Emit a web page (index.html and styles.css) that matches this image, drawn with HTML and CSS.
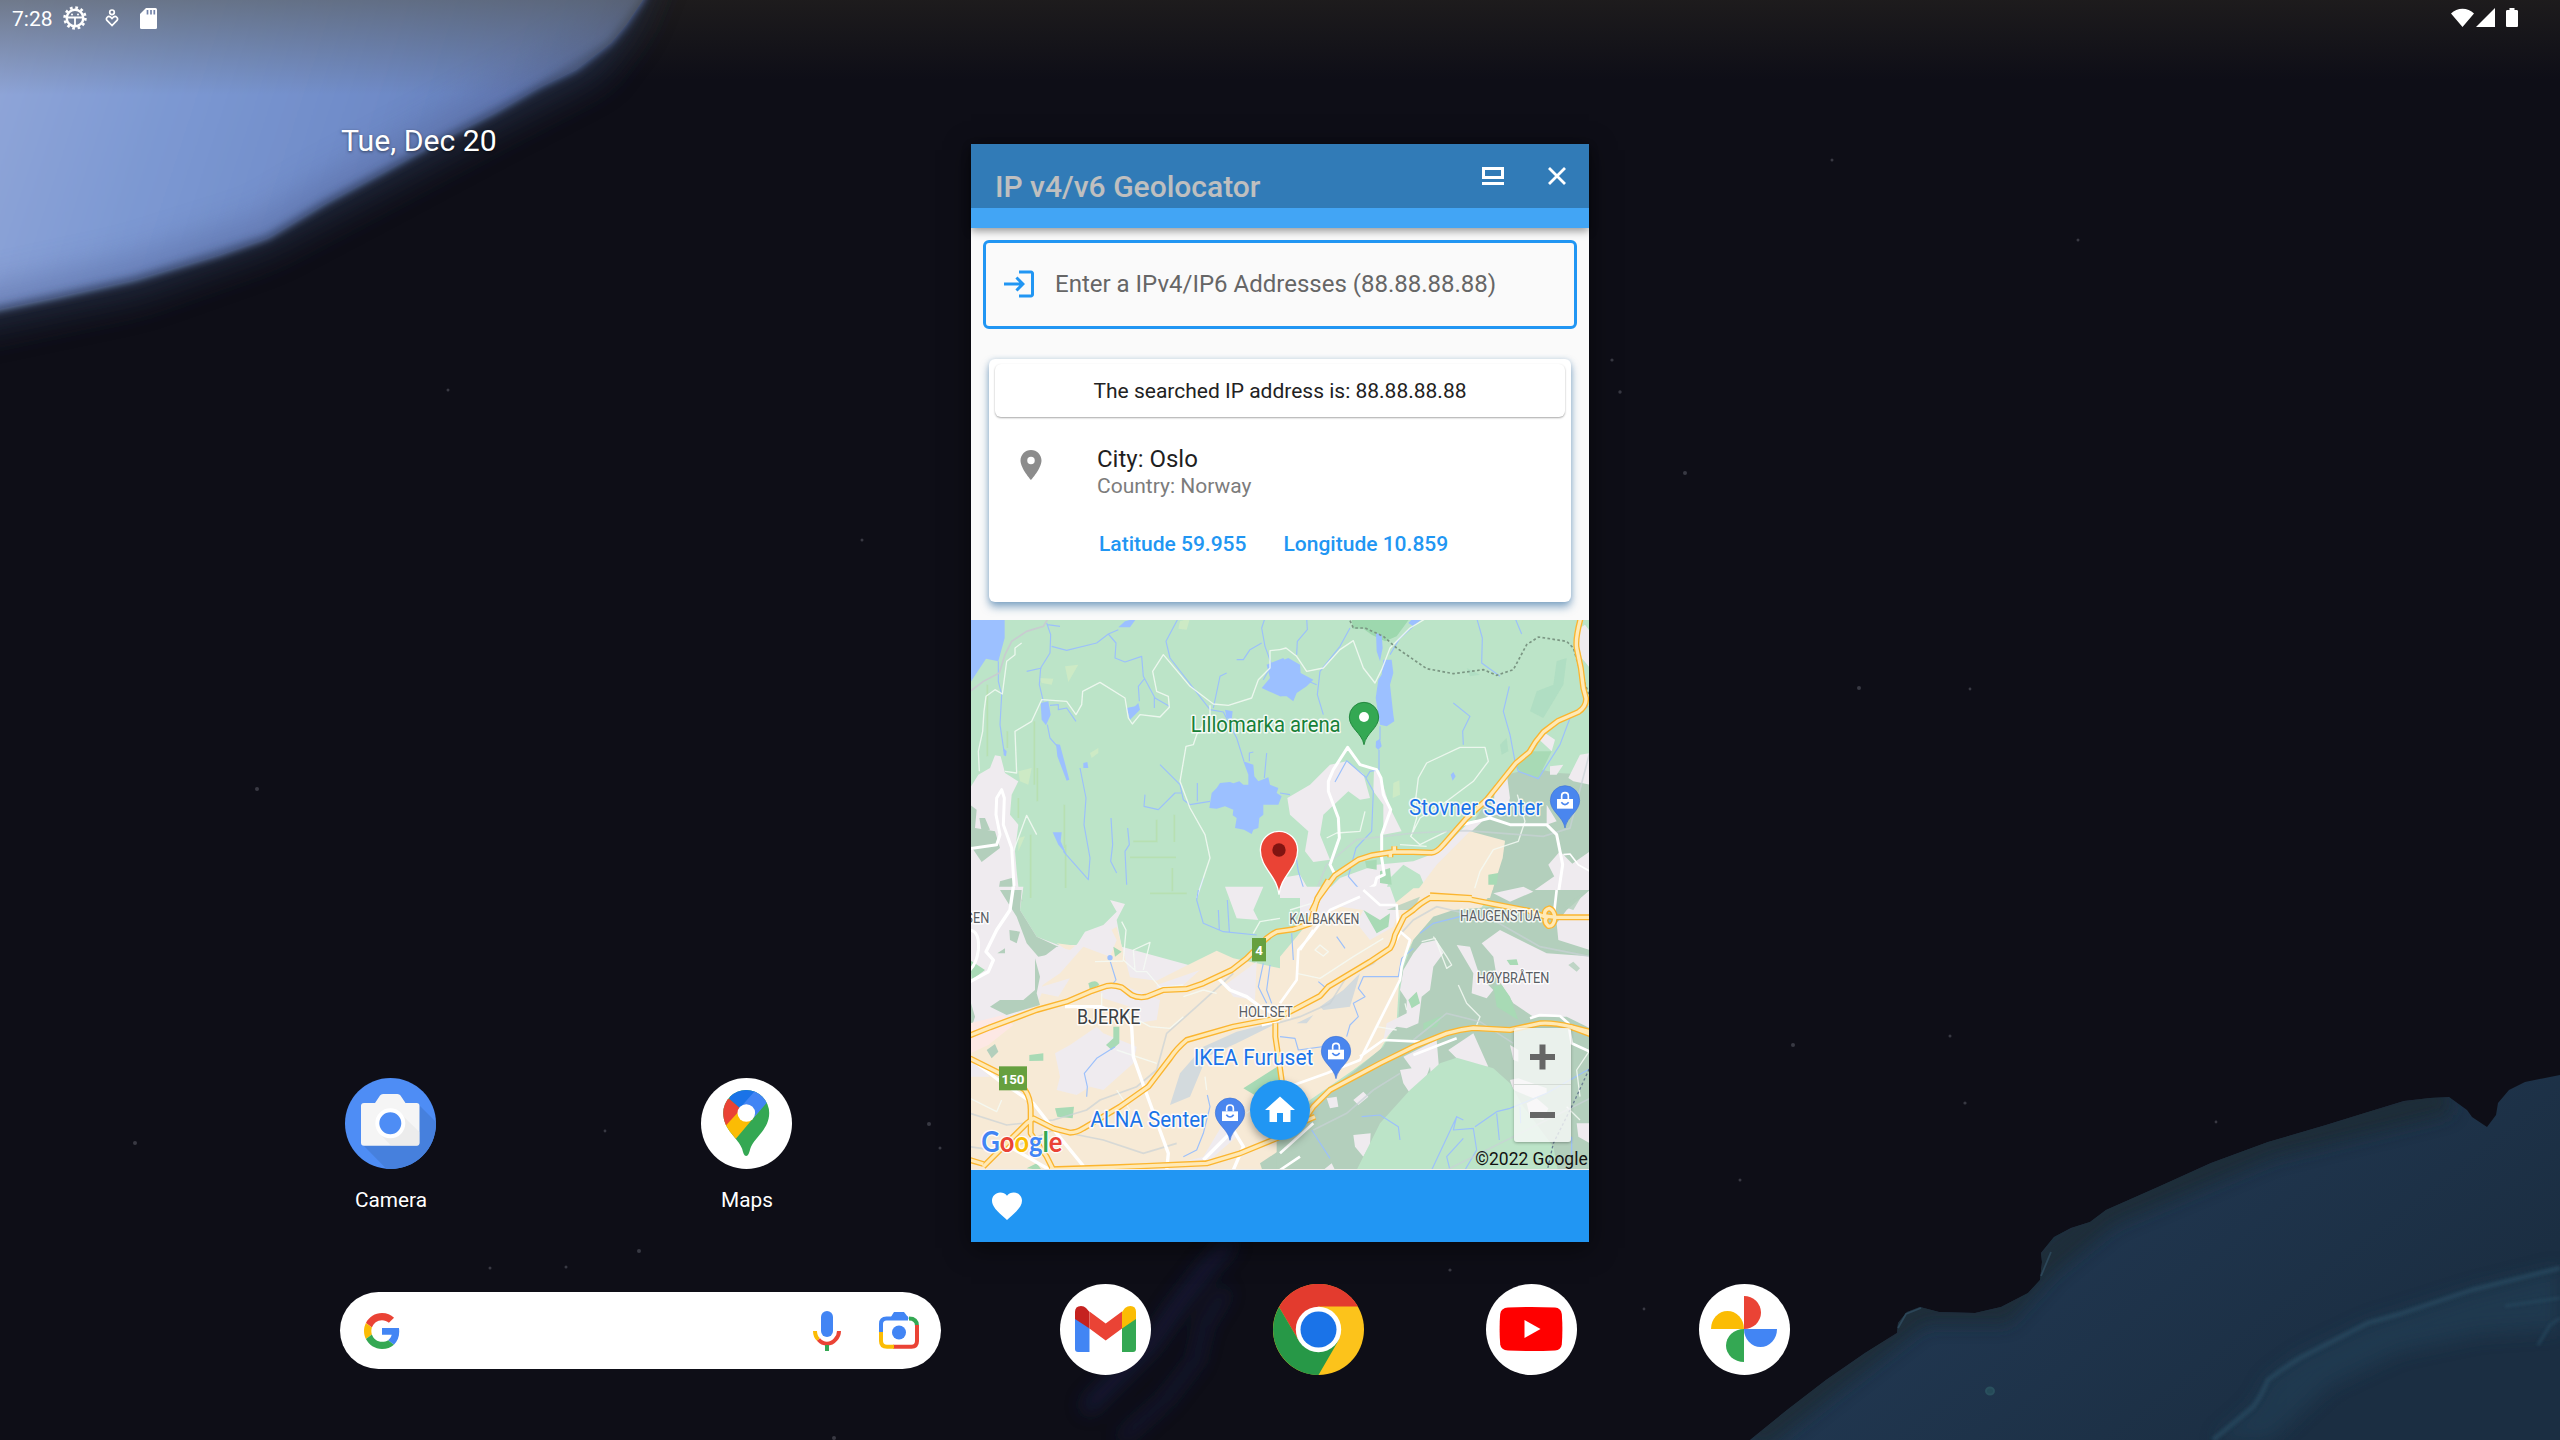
FILE: index.html
```html
<!DOCTYPE html>
<html lang="en">
<head>
<meta charset="utf-8">
<title>IP v4/v6 Geolocator</title>
<link rel="stylesheet" href="styles.css">
</head>
<body>
<svg class="wallpaper" viewBox="0 0 2560 1440" aria-hidden="true">
  <defs>
    <linearGradient id="sky" x1="0" y1="60" x2="560" y2="240" gradientUnits="userSpaceOnUse">
      <stop offset="0" stop-color="#8fa5d8"/><stop offset=".3" stop-color="#7c98d2"/><stop offset=".62" stop-color="#6f8bc8"/><stop offset="1" stop-color="#6078b2"/>
    </linearGradient>
    <linearGradient id="scrim" x1="0" y1="0" x2="0" y2="1">
      <stop offset="0" stop-color="#55554c" stop-opacity=".55"/><stop offset="1" stop-color="#55554c" stop-opacity="0"/>
    </linearGradient>
    <linearGradient id="topdark" x1="0" y1="0" x2="0" y2="1">
      <stop offset="0" stop-color="#24211f" stop-opacity=".7"/><stop offset="1" stop-color="#24211f" stop-opacity="0"/>
    </linearGradient>
    <linearGradient id="sea" x1="2100" y1="1180" x2="2300" y2="1440" gradientUnits="userSpaceOnUse">
      <stop offset="0" stop-color="#20364f"/><stop offset="1" stop-color="#1b2e42"/>
    </linearGradient>
    <filter id="b3"><feGaussianBlur stdDeviation="4"/></filter>
    <filter id="b8" x="-20%" y="-20%" width="140%" height="140%"><feGaussianBlur stdDeviation="9"/></filter>
    <filter id="b14" x="-30%" y="-30%" width="160%" height="160%"><feGaussianBlur stdDeviation="16"/></filter>
    <filter id="b2"><feGaussianBlur stdDeviation="1.800"/></filter>
    <clipPath id="cloudclip"><path d="M-60 -60H668L643 0 626 25 611 43 576 70 540 87 495 113 442 140 384 172 326 203 268 238 219 255 134 280 58 297 0 309 -60 320z"/></clipPath>
    <clipPath id="shore"><path d="M1750 1440L1787 1410 1826 1380 1865 1353 1897 1333 1898 1323 1907 1312 1920 1307 1939 1312 1975 1313 2001 1307 2028 1293 2040 1280 2042 1262 2041 1253 2054 1237 2071 1228 2090 1222 2106 1210 2158 1187 2211 1163 2268 1142 2326 1125 2368 1112 2404 1101 2430 1098 2449 1097 2467 1110 2472 1117 2487 1127 2496 1115 2498 1103 2509 1090 2525 1082 2560 1075V1440z"/></clipPath>
  </defs>
  <rect width="2560" height="1440" fill="#0e0e17"/>
  <rect width="2560" height="80" fill="url(#topdark)"/>
  <path d="M-60 -60H672L636 30 600 78 500 130 380 194 270 252 140 298 -60 340z" fill="#26334a" opacity=".7" filter="url(#b14)"/>
  <path d="M-60 -60H668L643 0 626 25 611 43 576 70 540 87 495 113 442 140 384 172 326 203 268 238 219 255 134 280 58 297 0 309 -60 320z" fill="url(#sky)" filter="url(#b3)"/>
  <g clip-path="url(#cloudclip)">
    <path d="M668 -60L643 0 611 43 540 87 442 140 326 203 268 238 134 280 0 309 -60 320" fill="none" stroke="#56689e" stroke-width="44" stroke-linejoin="round" opacity=".55" filter="url(#b14)"/>
    <path d="M668 -60L643 0 611 43 540 87 442 140 326 203 268 238 134 280 0 309 -60 320" fill="none" stroke="#2c3a58" stroke-width="5" opacity=".6" filter="url(#b3)"/>
    <rect width="700" height="95" fill="url(#scrim)"/>
  </g>
  <g filter="url(#b8)" fill="none" stroke="#1a2150" opacity=".6">
    <path d="M1232 1240L1205 1270 1178 1305 1150 1345 1085 1410" stroke-width="14"/>
    <path d="M1226 1290L1204 1325 1196 1360 1165 1400 1120 1440" stroke-width="9"/>
  </g>
  <g clip-path="url(#shore)">
    <rect x="1740" y="1060" width="820" height="380" fill="url(#sea)"/>
    <path d="M1750 1440L1826 1380 1920 1307 2001 1307 2042 1262 2106 1210 2268 1142 2449 1097" fill="none" stroke="#1b2a33" stroke-width="34" opacity=".75" filter="url(#b8)"/>
    <path d="M2213 1440L2253 1405 2268 1378 2300 1355 2368 1323 2400 1313 2472 1290 2560 1268V1330L2480 1335 2400 1352 2330 1385 2270 1440z" fill="#213f57" opacity=".6" filter="url(#b8)"/>
    <path d="M2213 1440Q2235 1422 2253 1407 2262 1395 2268 1380 2285 1367 2300 1358L2368 1323 2400 1314 2472 1290 2560 1268" fill="none" stroke="#28475d" stroke-width="5" stroke-linejoin="round" opacity=".8" filter="url(#b2)"/>
    <path d="M2505 1306L2560 1298M2538 1345L2550 1325 2560 1318" fill="none" stroke="#28485f" stroke-width="3" opacity=".7" filter="url(#b2)"/>
    <ellipse cx="1990" cy="1391" rx="4" ry="3.500" fill="#254a58" stroke="#2a505e" stroke-width="2"/>
  </g>
  <path d="M1898 1328L1906 1314 1921 1308M2041 1276L2051 1252" fill="none" stroke="#2c4658" stroke-width="1.800"/>
  <g fill="#5c5d68" opacity=".55">
    <circle cx="257" cy="789" r="2"/><circle cx="639" cy="1251" r="2"/><circle cx="929" cy="1124" r="2"/><circle cx="940" cy="1148" r="1.500"/><circle cx="605" cy="1131" r="1.400"/><circle cx="490" cy="1268" r="1.500"/><circle cx="566" cy="1267" r="1.500"/><circle cx="1793" cy="1045" r="2"/><circle cx="1950" cy="1036" r="1.500"/><circle cx="1965" cy="1103" r="1.600"/><circle cx="1859" cy="688" r="2"/><circle cx="1685" cy="473" r="2"/><circle cx="1620" cy="392" r="1.700"/><circle cx="1612" cy="360" r="1.600"/><circle cx="448" cy="390" r="1.500"/><circle cx="862" cy="540" r="1.500"/><circle cx="1832" cy="160" r="1.500"/><circle cx="2078" cy="240" r="1.500"/><circle cx="135" cy="1143" r="2"/><circle cx="834" cy="1438" r="2"/><circle cx="1740" cy="1180" r="1.500"/><circle cx="1644" cy="1309" r="1.400"/><circle cx="1450" cy="1270" r="1.600"/><circle cx="1970" cy="689" r="1.400"/><circle cx="2216" cy="1122" r="1.400"/>
  </g>
</svg>

<header class="status">
  <span class="clock">7:28</span>
  <svg class="s-gear" viewBox="0 0 24 24"><circle cx="12" cy="12" r="8.300" fill="none" stroke="#fff" stroke-width="2.400"/><circle cx="12" cy="12" r="10.400" fill="none" stroke="#fff" stroke-width="2.600" stroke-dasharray="2.700 2.745"/><path d="M5 11.500h14M12 12v8" stroke="#fff" stroke-width="1.800"/><circle cx="9" cy="8.500" r="1" fill="#fff"/><circle cx="15" cy="8.500" r="1" fill="#fff"/></svg>
  <svg class="s-heart" viewBox="0 0 14 18" fill="none" stroke="#fff" stroke-width="1.700"><circle cx="7" cy="3.300" r="2.300"/><path d="M7 16.500L2 11.400C.3 9.200 3.200 6.300 5.400 8L7 9.500 8.600 8C10.800 6.300 13.700 9.200 12 11.400z"/></svg>
  <svg class="s-sd" viewBox="0 0 17 21"><path d="M6 0h9.500a1.500 1.500 0 0 1 1.500 1.500v18a1.500 1.500 0 0 1-1.500 1.500h-14A1.500 1.500 0 0 1 0 19.500V6z" fill="#fff"/><path d="M7.500 2v4.500M11 2v4.500M14.300 2v4.500" stroke="#7383aa" stroke-width="1.700"/></svg>
  <span class="grow"></span>
  <svg class="s-net" viewBox="0 0 70 22"><path d="M0 5.500C6-1 17-1 23 5.500L11.500 19z M25 19L44 0V19z M55 3.500c0-1 .5-1.500 1.500-1.500H58.500V0h5V2h2c1 0 1.500.5 1.500 1.500V17.500c0 1-.5 1.500-1.500 1.500h-9c-1 0-1.500-.5-1.500-1.500z" fill="#fff"/></svg>
</header>

<main class="home">
  <div class="date">Tue, Dec 20</div>
  <div class="apps">
    <div class="app">
      <svg class="icon" viewBox="0 0 91 91">
        <defs><clipPath id="disc"><circle cx="45.500" cy="45.500" r="45.500"/></clipPath></defs>
        <g clip-path="url(#disc)"><rect width="91" height="91" fill="#4e8df5"/><path d="M74 27L120 73V120H70L18 67z" fill="#4680dd"/></g>
        <path d="M19 25H30L35 17.500Q36 16 38 16H52.500Q54.500 16 55.500 17.500L60.500 25H71.500Q74.500 25 74.500 28V64.700Q74.500 67.700 71.500 67.700H19Q16 67.700 16 64.700V28Q16 25 19 25z" fill="#f5f5f5"/>
        <path d="M56 36L74.500 54V64.700Q74.500 67.700 71.500 67.700H46L36 57z" fill="#e2e2e2" opacity=".45"/>
        <circle cx="45.300" cy="45.300" r="13" fill="#4e8df5" stroke="#fff" stroke-width="4"/>
      </svg>
      <span>Camera</span>
    </div>
    <div class="app">
      <svg class="icon" viewBox="0 0 91 91">
        <defs><clipPath id="drop"><path d="M45.200 78C43.200 78 42.200 75 41.200 71C37.500 60 22.200 52 22.200 35A23 23 0 0 1 68.200 35C68.200 52 52.500 60 49.200 71C48.200 75 47.200 78 45.200 78"/></clipPath></defs>
        <circle cx="45.500" cy="45.500" r="45.500" fill="#fff"/>
        <g clip-path="url(#drop)"><rect x="20" y="10" width="50" height="70" fill="#34a853"/><path d="M18 52.500L45 22.500 60 31 35.500 60 24 75z" fill="#fbbc04"/><path d="M10 20L28.600 21 40 31 24 48.500 10 50z" fill="#ea4335"/><path d="M28.600 21L39 30 45 35 62 3 30 5z" fill="#1a73e8"/><path d="M53 14L38 31 45 40 53 39.500 66 24.500 75 5 60 5z" fill="#4285f4"/></g>
        <circle cx="45.300" cy="35" r="8.800" fill="#fff"/>
      </svg>
      <span>Maps</span>
    </div>
  </div>
  <div class="dock">
    <div class="search">
      <svg class="g" viewBox="0 0 48 48"><path fill="#ea4335" d="M24 9.500c3.540 0 6.710 1.220 9.210 3.600l6.850-6.850C35.900 2.380 30.470 0 24 0 14.620 0 6.510 5.380 2.560 13.220l7.980 6.190C12.430 13.720 17.740 9.500 24 9.500z"/><path fill="#4285f4" d="M46.980 24.550c0-1.570-.15-3.090-.38-4.550H24v9.020h12.940c-.58 2.960-2.260 5.480-4.780 7.180l7.730 6c4.510-4.180 7.090-10.360 7.090-17.650z"/><path fill="#fbbc05" d="M10.530 28.590c-.48-1.450-.76-2.990-.76-4.590s.27-3.140.76-4.590l-7.980-6.190C.92 16.460 0 20.120 0 24c0 3.880.92 7.540 2.560 10.780l7.970-6.190z"/><path fill="#34a853" d="M24 48c6.480 0 11.930-2.130 15.890-5.810l-7.730-6c-2.150 1.450-4.920 2.300-8.160 2.300-6.260 0-11.570-4.220-13.470-9.910l-7.980 6.190C6.510 42.620 14.620 48 24 48z"/></svg>
      <span class="grow"></span>
      <svg class="mic" viewBox="0 0 28 40" fill="none"><rect x="8" y="0" width="12" height="26" rx="6" fill="#4285f4"/><path d="M2 20C2 23.500 3.200 26.500 5.500 28.500" stroke="#fbbc04" stroke-width="4"/><path d="M5.500 28.500C10 34 18 34 22.500 28.500C25 26 26 23.500 26 20" stroke="#ea4335" stroke-width="4"/><path d="M14 34v6" stroke="#34a853" stroke-width="4"/></svg>
      <svg class="lens" viewBox="0 0 40 37" fill="none" stroke-width="4"><path d="M2 22V12Q2 6.500 7.500 6.500H29" stroke="#4285f4"/><path d="M11 6.500L15 0H25L30 6.500z" fill="#4285f4"/><path d="M30 6.500Q38 6.500 38 14" stroke="#34a853"/><path d="M38 13V29Q38 34.700 32.500 34.700H14" stroke="#ea4335"/><path d="M15 34.700H8Q2 34.700 2 29V20" stroke="#fbbc04"/><circle cx="20" cy="20.500" r="7" fill="#4285f4"/></svg>
    </div>
    <svg class="icon gmail" viewBox="0 0 91 91"><circle cx="45.500" cy="45.500" r="45.500" fill="#fff"/><path d="M15 33L29.500 44V68H18Q15 68 15 65z" fill="#4285f4"/><path d="M76 33L62 44V68H73Q76 68 76 65z" fill="#34a853"/><path d="M15 35V28Q15 22 21 22Q24 22 26 24L29.500 28V44.500z" fill="#c5221f"/><path d="M76 35V28Q76 22 70.500 22Q67.500 22 65 24L62 28V44.500z" fill="#fbbc04"/><path d="M29.500 27.500L45.700 39.500 62 27.500V44.500L45.700 56.500 29.500 44.500z" fill="#ea4335"/></svg>
    <svg class="icon chrome" viewBox="0 0 91 91"><circle cx="45.500" cy="45.500" r="45.500" fill="#fcc31b"/><path d="M6 23A45.500 45.500 0 0 1 85 22.500H45.500L26 57z" fill="#e33b2e"/><path d="M6 23A45.500 45.500 0 0 0 45.500 91L65.500 56.500 45.500 60 26 57z" fill="#279847"/><circle cx="45.500" cy="45.500" r="22.700" fill="#fff"/><circle cx="45.500" cy="45.500" r="18" fill="#1a73e8"/></svg>
    <svg class="icon youtube" viewBox="0 0 91 91"><circle cx="45.500" cy="45.500" r="45.500" fill="#fff"/><path d="M22 23.500Q45 22.500 69 23.500Q75 24 75.800 30Q77 45 75.800 60.500Q75 66 69 66.500Q45 67.500 22 66.500Q15 66 14.200 60.500Q13 45 14.200 30Q15 24 22 23.500z" fill="#f00"/><path d="M38.500 36L54.500 45 38.500 54z" fill="#fff"/></svg>
    <svg class="icon photos" viewBox="0 0 91 91"><circle cx="45.500" cy="45.500" r="45.500" fill="#fff"/><path d="M45 12a17 16.500 0 0 1 0 33z" fill="#ea4335"/><path d="M78 45a16.500 18 0 0 1-33 0z" fill="#4285f4"/><path d="M45 78a18 16.500 0 0 1 0-33z" fill="#34a853"/><path d="M12 45a16.500 18 0 0 1 33 0z" fill="#fbbc04"/></svg>
  </div>
</main>

<section class="window">
  <header class="appbar"><h1>IP v4/v6 Geolocator</h1></header>
  <div class="caption">
    <svg class="cap-max" viewBox="0 0 22 18"><path d="M1.500 1.500H20.500V10.500H1.500z" fill="none" stroke="#fff" stroke-width="3"/><path d="M0 16.500H22" stroke="#fff" stroke-width="3"/></svg>
    <svg class="cap-close" viewBox="0 0 18 18"><path d="M1 1L17 17M17 1L1 17" stroke="#fff" stroke-width="2.800"/></svg>
  </div>
  <div class="content">
    <div class="field">
      <svg viewBox="0 0 24 24"><path fill="#2196f3" d="M11 7L9.600 8.400l2.600 2.600H2v2h10.200l-2.600 2.600L11 17l5-5-5-5zm9 12h-8v2h8c1.100 0 2-.9 2-2V5c0-1.100-.9-2-2-2h-8v2h8v14z"/></svg>
      <span>Enter a IPv4/IP6 Addresses (88.88.88.88)</span>
    </div>
    <article class="card">
      <div class="result">The searched IP address is: 88.88.88.88</div>
      <div class="place">
        <svg viewBox="0 0 24 24"><path fill="#8c8c8c" fill-rule="evenodd" d="M12 2C8.130 2 5 5.130 5 9c0 5.250 7 13 7 13s7-7.750 7-13c0-3.870-3.130-7-7-7zm0 9.500a2.500 2.500 0 1 1 0-5 2.500 2.500 0 0 1 0 5z"/></svg>
        <div class="place-text"><div class="city">City: Oslo</div><div class="country">Country: Norway</div></div>
      </div>
      <div class="coords"><span>Latitude 59.955</span><span>Longitude 10.859</span></div>
    </article>
  </div>
  <div class="map">
    <svg class="tiles" viewBox="0 0 1854 1650">
      <defs>
        <g id="highways">
          <g transform="translate(927 -6)">
            <path d="M905 -10Q885 60 890 90Q905 150 910 210L918 240Q920 265 895 282L835 308 790 342Q765 370 748 402L708 435 660 495 620 545 560 600 490 680Q470 704 455 704L400 702 340 702 275 712 235 725 165 772 115 840 95 880"/>
            <path d="M343 685V705M331 700V718"/>
            <path d="M450 832L575 840"/>
          </g>
          <g transform="translate(927 810)">
            <path d="M145 -30L112 25 92 100 40 118 -10 125Q-40 140 -60 165L-100 205 -145 240 -230 280 -280 297 -350 300 -400 320Q-425 325 -445 315L-475 292Q-500 284 -520 288L-570 305 -640 335 -730 360 -870 412 -940 440"/>
            <path d="M950 82H830L795 78Q790 60 808 55 822 60 825 82 822 110 805 108 790 95 800 82L745 62 640 42 570 28 450 24Q420 40 400 60L372 80 345 135Q340 160 330 175L270 215 145 290 120 318 50 355 -10 385 -140 410 -280 450Q-310 475 -330 505L-395 590 -480 650 -590 715Q-610 728 -630 728L-680 715 -740 685 -760 700 -800 740 -890 830"/>
            <path d="M-14 400V440L-5 500 5 570 0 620 30 660"/>
            <path d="M-930 505L-820 560 -765 600Q-748 625 -748 660V730L-700 800 -680 840"/>
            <path d="M950 430L870 410Q820 397 780 400L690 420 580 414Q540 418 500 430L405 468 300 520 150 600 100 650 60 710 -10 745 -120 790 -220 820 -400 828 -500 832 -690 838"/>
            <path d="M870 410L950 440M105 680L60 700M-930 810L-890 822"/>
          </g>
        </g>
      </defs>
      <rect width="1854" height="1650" fill="#bce4c8"/>

      <!-- north-west -->
      <g transform="translate(-3 -6)">
        <path class="urban" d="M0 510L25 470 60 450 75 412 92 415 105 465 145 490 125 530 120 590 145 620 135 700 140 760 150 850H0z"/>
        <path class="dark" d="M0 560L20 575 15 630 75 640 90 690 35 732 0 680zM90 790L125 780 158 850H80zM28 600H45L60 635 35 640z"/>
        <path class="pale" d="M145 460L185 450 175 500 150 490zM285 145L325 140 295 192zM360 405L385 390V405L365 420zM145 660L165 655 145 700zM630 10L660 0 650 35 625 32zM208 180L250 182 245 200 215 195z"/>
        <path d="M52 200V415M112 340V390M193 310V500M202 450V550M145 540V600M283 560V690M287 680V810M182 650V840M560 605V670H490M613 590V672M480 718H618M607 750V820M540 826H650" fill="none" stroke="#b5dfad" stroke-width="5" opacity=".8"/>
        <path class="water" d="M0 0H104V60L85 130 48 122 0 195zM445 28L465 10 500 0 480 28zM212 255L235 250 242 290 228 322 215 305zM258 378L270 380 298 485 290 488 262 415zM470 270L495 265 505 255 510 275 480 305zM248 643H275L272 670 290 710 265 680zM340 435L352 432 355 450 340 450zM765 275L788 280 785 305 770 300zM718 570L725 525 740 510 750 495 780 492 790 496 808 490 820 500 835 500 835 470 820 430 850 440 853 475 865 490 895 478 900 500 925 510 920 525 935 535 925 560 880 560 880 590 868 600 865 630 850 635 845 648 830 640 822 635 795 630 800 600 788 592 790 575 765 565 740 572zM875 210L900 180 890 140 940 120 960 150 985 180 1000 185 990 215 970 230 930 235zM100 390L110 400 108 415 101 412z"/>
        <path class="stream" d="M85 130V190L95 230 90 320 102 400M230 15L242 50 240 105 212 150 208 200 220 250M232 320L240 360 262 385M245 85L290 97 380 75 415 48 445 35M415 48L438 75 435 120 465 132 515 115 520 175 555 240 598 265M525 180L505 205 508 250M553 235V270M215 150L170 160M240 262L265 260 265 275 290 270 318 310M330 450L348 540 342 620 360 720 355 785 280 700M625 0L588 70 600 120 720 275 760 282 800 360 822 430M770 165L750 175 730 270M800 125L820 125 840 95 875 75M885 0L875 30 885 85 905 140 880 185M570 440L630 500 640 545 660 560 720 550M525 530L522 565 565 575 615 525 635 525M682 495V550M838 430V405L850 402M890 405L883 480M423 600L428 680 422 730 440 765M473 630L478 680 465 700 470 800M700 780L680 840M232 20L270 25"/>
        <path class="path" d="M28 460L25 400 38 340 42 280 48 235 75 215 97 228 110 130 135 110V90L155 75M105 460L140 465 135 340 185 310 215 245 290 250 318 290 335 260 338 220 390 193 465 240 475 300 487 318 510 290 570 297 598 268 595 235 560 220 548 160 580 110 660 205 730 258 775 262 845 240 865 185 900 150V98L930 95M720 262L720 290 680 350 670 380 648 385 630 490 660 570 705 650 720 720 700 780 680 840M130 700L170 592 200 650"/>
        <path d="M0 220L40 190 88 165 105 110 125 70 170 40 220 25 235 0" fill="none" stroke="#c8ccd0" stroke-width="5"/>
        <path class="road" d="M0 692L80 680 90 650 78 590 80 540 95 515 103 540 100 620 125 690 135 850" stroke-width="9"/>
      </g>

      <!-- north-east -->
      <g transform="translate(927 -6)">
        <path d="M215 0H390L350 55 315 70 275 50 250 32H218z" fill="#9dd8ae"/>
        <path class="dark" d="M660 490L680 470 760 450 830 465 930 470V850H620L675 670 580 650 575 620z"/>
        <path class="urban" d="M22 540L90 500 150 440 200 430 250 468 270 540 240 545 205 520 130 590 120 650 150 725 100 732 75 700 85 640 30 590zM282 455L300 470 330 570 365 640 310 650 310 560 280 520zM645 500L680 465 690 540 680 580 560 620 480 700 400 730 290 740 180 780 120 840 310 840 330 780 370 740 420 770 440 820 575 640 640 580zM885 40L915 20 930 40V150L905 120zM778 365L795 345 825 365 815 400zM810 445L850 440 830 470 810 470zM865 480L900 410 930 405V500L880 490zM805 740L840 700 880 740 830 790zM0 780L60 770 100 840H0zM800 560L830 610 800 620zM730 840L930 700V840z"/>
        <path d="M570 640L675 668 668 720 630 840H395L470 740z" fill="#f7ead6"/>
        <path d="M755 400L815 400 775 480 720 460 700 435zM625 770L655 765 650 800 625 800zM255 730L290 725 290 755 260 750zM300 760L330 750 335 800 300 795z" fill="#a8dab5"/>
        <path d="M770 220L820 200 830 130 860 120 850 200 790 300 750 280zM660 380L680 360 685 400 665 410zM560 150L600 170 570 175z" fill="#abdcc0" opacity=".7"/>
        <path class="pale" d="M340 495L358 487 360 530 338 540z"/>
        <path class="water" d="M288 45L305 50 308 90 300 130 290 100zM310 125L335 125 340 165 330 200 340 290 343 310 320 325 300 320 287 240 295 185 305 170zM385 15L400 0 430 0 400 25zM288 370L300 362 305 385 295 395 287 388zM512 470L520 462 527 475 518 488zM0 130L25 120 60 140 62 165 100 185 80 205 50 225 40 250 20 235H0z"/>
        <path class="stream" d="M80 0L82 35 52 70 50 110M210 30L180 85 120 160 112 230 130 290M85 190L110 200M400 25L360 60 330 110M300 325V365M297 395V455L270 460 258 480 280 520 275 640 228 690 205 775 235 810 230 840M165 492L200 428 260 480M590 0L607 60 605 135 660 175M705 0L725 48M520 255L570 295 548 340 550 380M688 205L670 280 690 350 705 430 715 460 775 482 840 380 870 300 925 265M0 525L30 530M48 715L55 760 80 840"/>
        <path class="path" d="M0 95L18 90 50 115 80 160 130 150 180 95 220 68 250 150 285 195 305 155 330 90 390 30 440 0M395 650L410 600 405 560 415 480 440 435 540 388 615 388 625 430 580 490 500 550 420 600 392 655 420 680 500 640M140 660L170 645 240 640 255 580M360 680L440 685M712 530L735 610 715 670 640 695 600 760 575 840"/>
        <path class="rail" d="M100 840L140 740 230 665 400 645 560 638 790 655 870 630 930 400"/>
        <path class="road" d="M165 770L150 740 178 660 175 600 145 520V490L160 455 203 388 240 440 290 455 303 480 310 530 332 575 305 650V720L313 770 290 780 285 800 240 830M545 620L590 610 630 600 690 620 800 620 830 650 848 740 833 840" stroke-width="9"/>
        <path class="road" d="M850 710L870 708 895 740 930 760" stroke-width="5"/>
        <path d="M210 8L220 30H255L310 55 350 90 440 152 520 167 610 155 650 172 700 155 740 80 775 57 860 70 880 90 895 140 930 240" fill="none" stroke="#7b9683" stroke-width="5" stroke-dasharray="8 7"/>
      </g>

      <!-- south-west -->
      <g transform="translate(-3 810)">
        <path class="urban" d="M0 -10H160L150 60 200 140 265 165 320 165 345 125 400 105 440 65 420 30 465 42 440 90 455 170 930 300V500H0z"/>
        <path d="M0 442L80 400 200 345 215 310 265 320 300 265 215 290 250 240 290 180 260 160 340 170 440 110 480 262 560 272 640 232 740 182 790 205 930 235V850H0z" fill="#f7ead6"/>
        <path class="dark" d="M90 0H155L150 60 200 140 265 170 255 190 205 200 170 160 140 80zM195 205L210 260 200 310 210 345 110 375 60 350 90 330 160 330 195 300zM118 120L150 125 140 160 120 150zM82 190L105 175V190zM50 480L75 462 85 485 65 505zM0 330L15 380 0 425z"/>
        <path d="M0 400L100 375 130 405 55 465 0 490z" fill="#fde8e4"/>
        <path class="urban" d="M215 205L260 170 300 180 350 140 420 110 440 150 420 200 340 170 270 250 210 290zM300 465L380 410 400 430 500 470 490 520 400 600 360 590 320 615 260 600 270 560 255 490zM390 300L470 290 570 330 560 390 500 400 480 350 400 325zM560 285L690 240 640 285 560 295zM0 505L60 560 0 560zM700 800L760 700 800 740 720 810 640 815zM765 285L860 215 855 330 790 320zM765 -10H880L850 60 865 90 800 85z"/>
        <path d="M355 280Q380 265 388 285L360 300zM430 410H448V460L425 480 408 465 430 445zM178 495L220 490V512L178 513zM255 655L312 650 308 685 262 680zM170 835L200 820 215 840zM820 595L930 525V640L870 625zM0 210L45 240 5 270zM430 170L455 185 435 200z" fill="#a8dab5"/>
        <path class="dark" d="M870 820L930 780V850H880z"/>
        <path class="railyard" d="M600 645L630 550 700 470 800 425 900 400 910 405 800 460 710 500 660 620z"/>
        <path class="stream" d="M420 212L438 270 428 282M350 620L352 590 343 550 380 505 435 470M712 615L720 650 700 730 680 780 640 800M685 0L680 30 700 100 760 125 860 135M745 60L748 120M772 30L778 125M880 220L865 290 890 340M900 225L890 300 905 340"/>
        <circle cx="420" cy="203" r="8" fill="#9cc0ff"/>
        <path class="rail" d="M0 670L110 705 250 690 350 660 390 630 500 590 560 540 590 430 680 350 790 250M0 770L100 785 250 720 400 750 520 790 620 760"/>
        <path class="path" d="M455 95L468 120 460 210 500 245 530 245 570 292 640 285M495 240L490 180 540 157 520 240M375 215L460 213M0 625L80 665 95 630M395 310V350L470 370 540 410 600 415 640 380M440 480L560 520M480 660L440 600M705 560L710 600M830 670L870 640M640 320L700 300 740 310M850 130L870 95 930 85"/>
        <path class="road" d="M130 -10L120 60 80 120 48 185 70 210 55 245 0 275M285 350L390 350 470 380 485 410 490 500 520 585 595 790 590 840M745 265L780 300 830 320 870 350 910 370M875 405L930 390M0 505L85 570 190 640 260 730 350 840M110 765L240 840M700 810L790 720 820 770 790 840" stroke-width="10"/>
        <path class="road" d="M0 120Q30 125 25 180 20 220 0 240" stroke-width="9"/>
      </g>

      <!-- south-east -->
      <g transform="translate(927 810)">
        <path d="M0 200L50 140 90 90 150 40 230 25 320 60 400 -5 640 -5 600 60 460 80 400 150 360 230 350 395 300 480 220 540 90 630 0 720z" fill="#f7ead6"/>
        <path class="dark" d="M460 80L520 60 640 50 640 0H940V850H-10V745L60 700 90 640 220 545 310 470 355 390 365 250 400 150z"/>
        <path class="urban" d="M60 -10H200L330 -10 355 60 340 110 270 150 230 100 250 60 180 50 110 90 60 70zM425 160L470 150 490 190 460 230 450 300 425 320 415 400 380 415 350 410 310 450 320 400 380 370 380 330 360 300 370 240 400 190zM605 160L660 120 750 165 800 190 940 200V420L860 380 760 380 700 340 650 260 640 200zM530 165L570 170 600 260 640 300 620 325 575 310 580 250zM360 540L395 535 370 500 470 450 480 570 455 575 450 530 410 640 370 580zM505 480L580 430 625 530 560 535zM640 10L730 -10 760 5 690 35zM830 100L860 60 930 0V180L835 150zM220 735L272 730 270 765 250 800 225 770zM140 625L170 620 175 650 150 655zM220 630L250 605 265 620 235 645zM690 465L715 480V515L700 510zM690 570L715 565 800 595V610L760 625 700 600zM740 640L770 625 805 655 790 690 750 680zM890 700H930V760L895 740zM130 840L155 820 165 840z"/>
        <path d="M225 850L300 700 390 600 480 520 530 503 640 535 690 580 730 650 820 770 835 850z" fill="#bce4c8"/>
        <path d="M640 290L665 285 690 320 715 390 650 350zM385 330L410 305 420 340 395 355zM430 400L490 375 470 410 430 420zM680 210L710 208 715 225 690 225zM250 60L300 90 330 70 325 110 290 130z" fill="#a8dab5"/>
        <path class="dark" d="M865 225L880 215 900 235 890 245zM850 50L910 10 880 60zM320 60L420 20 400 60z" opacity=".8"/>
        <path class="railyard" d="M50 400L100 375 80 400zM120 350L190 300 240 250 210 350 130 360z"/>
        <path class="stream" d="M0 440L45 445 55 480 200 460M400 175L365 205 355 260 250 260 235 295 255 320 220 340 235 380 210 405 200 440M420 130L460 100 540 80 640 85M170 140L195 175M35 130L40 210M115 275L145 300M245 680L300 675 355 710 360 750M95 720L150 805M455 840L530 680 550 690M585 710L650 665 690 655 800 610 940 530M530 680L520 720 580 715 590 780 555 840M550 745L500 800 510 840M650 670L658 750M720 650L722 700M875 740V800"/>
        <path class="path" d="M50 250L120 265 220 200 310 145M105 180L120 165 145 185 130 198zM460 140L500 200 515 225 500 235 465 145 425 155M535 285L560 340 600 380 590 405M375 340L380 360M290 410L350 420M30 60L95 40M930 480L890 540 900 620M900 690L860 650"/>
        <path class="rail" d="M-10 400L60 380 150 340 200 260 280 220 400 90 470 50 640 90 780 170 930 200M100 720L200 670 280 600 360 550M400 450L500 370 600 395 700 460M480 850L940 620"/>
        <path class="road" d="M240 20L150 60 90 140 55 180 50 270 0 340M100 120L60 180M250 0L300 45 350 45 355 120 390 150 365 230 360 270 290 410 240 510 140 550 0 600M240 500L310 450 420 455M335 175L360 130M750 385L780 375 840 378 865 400 875 460 940 490M400 495L530 445M830 0L820 90M0 790L100 700M0 840L60 800" stroke-width="8"/>
        <path d="M940 510L880 640 820 760 800 850" fill="none" stroke="#6b7f93" stroke-width="4" stroke-dasharray="8 7"/>
      </g>

      <use href="#highways" class="casing"/>
      <use href="#highways" class="core"/>

      <g class="label area">
        <text x="-17" y="909" textLength="72" lengthAdjust="spacingAndGlyphs">SEN</text>
        <text x="318" y="1211" textLength="190" lengthAdjust="spacingAndGlyphs" class="big">BJERKE</text>
        <text x="803" y="1190" textLength="162" lengthAdjust="spacingAndGlyphs">HOLTSET</text>
        <text x="955" y="911" textLength="210" lengthAdjust="spacingAndGlyphs">KALBAKKEN</text>
        <text x="1467" y="903" textLength="243" lengthAdjust="spacingAndGlyphs">HAUGENSTUA</text>
        <text x="1517" y="1088" textLength="218" lengthAdjust="spacingAndGlyphs">HØYBRÅTEN</text>
      </g>
      <g class="label poi">
        <text x="659" y="335" class="green" textLength="450" lengthAdjust="spacingAndGlyphs">Lillomarka arena</text>
        <text x="1314" y="584" textLength="400" lengthAdjust="spacingAndGlyphs">Stovner Senter</text>
        <text x="668" y="1336" textLength="359" lengthAdjust="spacingAndGlyphs">IKEA Furuset</text>
        <text x="358" y="1522" textLength="350" lengthAdjust="spacingAndGlyphs">ALNA Senter</text>
      </g>
      <g class="shield">
        <rect x="843" y="954" width="42" height="70"/><text x="864" y="1006">4</text>
        <rect x="84" y="1339" width="84" height="72"/><text x="126" y="1393">150</text>
      </g>
      <defs>
        <path id="pin" d="M0 83C-6 48-44 34-44 0A44 44 0 1 1 44 0C44 34 6 48 0 83z"/>
        <g id="shop"><use href="#pin" fill="#4a86ee" stroke="#3f74d6" stroke-width="2"/><path d="M-24-4H24V25H-24z" fill="#fff"/><path d="M-10-4V-13Q-10-23 0-23T10-13V-4" fill="none" stroke="#fff" stroke-width="5"/><path d="M-11 6Q0 20 11 6" fill="none" stroke="#4a86ee" stroke-width="5"/></g>
      </defs>
      <g transform="translate(1179 291)"><use href="#pin" fill="#34a853" stroke="#23883f" stroke-width="3"/><circle r="15" fill="#fff"/></g>
      <use href="#shop" x="1782" y="541"/><use href="#shop" x="1095" y="1293"/><use href="#shop" x="777" y="1478"/>
      <g transform="translate(924 690)"><path d="M0 134C-5 78-56 54-56 0A56 56 0 1 1 56 0C56 54 5 78 0 134z" fill="#ea4335" stroke="#fff" stroke-width="4"/><circle r="20" fill="#811411"/></g>
      <text class="glogo" x="31" y="1597" textLength="243" lengthAdjust="spacingAndGlyphs"><tspan fill="#4285f4">G</tspan><tspan fill="#ea4335">o</tspan><tspan fill="#fbbc04">o</tspan><tspan fill="#4285f4">g</tspan><tspan fill="#34a853">l</tspan><tspan fill="#ea4335">e</tspan></text>
      <text class="copy" x="1513" y="1634" textLength="337" lengthAdjust="spacingAndGlyphs">©2022 Google</text>
    </svg>
    <div class="zoom"><button class="plus" aria-label="Zoom in"></button><button aria-label="Zoom out"></button></div>
  </div>
  <footer class="bottom">
    <svg viewBox="0 0 24 24"><path fill="#fff" d="M12 21.350l-1.450-1.320C5.400 15.360 2 12.280 2 8.500 2 5.420 4.420 3 7.500 3c1.740 0 3.410.81 4.500 2.090C13.090 3.810 14.760 3 16.500 3 19.580 3 22 5.420 22 8.500c0 3.780-3.400 6.860-8.550 11.540L12 21.350z"/></svg>
  </footer>
  <button class="fab" aria-label="Home"><svg viewBox="0 0 24 24"><path fill="#fff" d="M10 20v-6h4v6h5v-8h3L12 3 2 12h3v8z"/></svg></button>
</section>
</body>
</html>
```

FILE: styles.css
```css
* { box-sizing: border-box; }
body { margin: 0; position: relative; width: 2560px; height: 1440px; overflow: hidden; background: #0e0e17; color: #fff; font-family: Roboto, "Liberation Sans", sans-serif; }
svg { display: block; flex: none; }
button { border: 0; padding: 0; margin: 0; background: none; font: inherit; }
.grow { flex: 1; }
.wallpaper { position: absolute; inset: 0; width: 2560px; height: 1440px; }

.status { position: relative; display: flex; align-items: center; height: 36px; padding: 0 39px 0 12px; }
.clock { font-size: 21px; line-height: 36px; width: 51px; padding-top: 1px; }
.s-gear { width: 24px; height: 24px; }
.s-heart { width: 14px; height: 18px; margin-left: 18px; }
.s-sd { width: 17px; height: 21px; margin-left: 21px; }
.s-net { width: 70px; height: 22px; margin-top: 2px; }

.home { position: relative; display: flex; flex-direction: column; padding-left: 340px; }
.date { margin-top: 83px; height: 44px; padding-left: 1px; font-size: 30.200px; line-height: 44px; text-shadow: 0 1px 3px rgba(0,0,0,.5); }
.apps { display: flex; gap: 256px; margin-top: 915px; }
.app { width: 102px; display: flex; flex-direction: column; align-items: center; font-size: 20.800px; }
.app + .app { margin-left: -2px; }
.app .icon { margin-right: 1px; }
.app span { margin-top: 18px; line-height: 26px; text-shadow: 0 1px 2px rgba(0,0,0,.4); }
.icon { width: 91px; height: 91px; }
.dock { display: flex; align-items: center; margin-top: 71px; height: 91px; }
.search { width: 601px; height: 77px; border-radius: 39px; background: #fff; display: flex; align-items: center; padding: 0 22px 0 24px; margin-top: 2px; }
.search .g { width: 36px; height: 36px; }
.mic { width: 28px; height: 40px; margin-right: 38px; }
.lens { width: 40px; height: 37px; }
.gmail { margin-left: 119px; }
.chrome, .youtube, .photos { margin-left: 122px; }

.window { position: absolute; left: 971px; top: 144px; width: 618px; height: 1098px; display: flex; flex-direction: column; background: #fafafa; box-shadow: 0 6px 24px rgba(0,0,0,.5); }
.appbar { position: relative; height: 84px; flex: none; display: flex; align-items: center; padding: 2px 0 0 24px; background: #42a5f5; box-shadow: 0 3px 8px rgba(0,0,0,.4); }
.appbar h1 { margin: 0; font-size: 30px; font-weight: 500; line-height: 40px; }
.caption { position: absolute; inset: 0 0 auto; height: 64px; display: flex; align-items: center; justify-content: flex-end; gap: 44px; padding-right: 23px; background: rgba(0,0,0,.25); }
.cap-max { width: 22px; height: 18px; }
.cap-close { width: 18px; height: 18px; }
.content { height: 392px; flex: none; padding: 12px 12px 0; }
.field { height: 89px; display: flex; align-items: center; gap: 18px; padding: 0 0 2px 15px; border: 3px solid #2196f3; border-radius: 6px; font-size: 24px; line-height: 32px; color: #666; }
.field svg { width: 36px; height: 36px; }
.card { margin: 30px 6px 0; height: 243px; padding: 5px 6px; border-radius: 6px; background: #fff; box-shadow: 0 5px 8px rgba(70,125,170,.65), 0 0 5px rgba(70,125,170,.22); }
.result { height: 53px; border-radius: 6px; background: #fff; color: #222; text-align: center; font-size: 21px; line-height: 54px; box-shadow: 0 1px 2px rgba(0,0,0,.35); }
.place { display: flex; padding: 30px 0 0 18px; }
.place svg { width: 36px; height: 36px; }
.place-text { margin-left: 48px; margin-top: -3px; }
.city { font-size: 24px; line-height: 30px; color: #1f1f1f; }
.country { font-size: 21px; line-height: 24px; color: #7c7c7c; }
.coords { display: flex; gap: 37px; padding: 30px 0 0 104px; font-size: 21px; font-weight: 500; line-height: 32px; color: #2196f3; }

.map { position: relative; height: 550px; flex: none; overflow: hidden; border-bottom: 1px solid #eee; }
.tiles { width: 618px; height: 550px; font-family: Roboto, "Liberation Sans", sans-serif; }
.urban { fill: #efebef; }
.dark { fill: #b3cfbc; }
.pale { fill: #cdeac5; }
.water { fill: #9cc0ff; }
.stream { fill: none; stroke: #9cc0fb; stroke-width: 3.500; stroke-linejoin: round; }
.path { fill: none; stroke: #f4faf5; stroke-width: 4; stroke-linejoin: round; opacity: .85; }
.rail { fill: none; stroke: #c9d1d6; stroke-width: 5; opacity: .7; }
.railyard { fill: #d3dadd; }
.road { fill: none; stroke: #fff; stroke-linejoin: round; }
.casing { fill: none; stroke: #fbb52f; stroke-width: 18; stroke-linejoin: round; }
.core { fill: none; stroke: #ffe9b5; stroke-width: 10; stroke-linejoin: round; }
.label text { paint-order: stroke; stroke: rgba(255,255,255,.85); stroke-width: 9px; stroke-linejoin: round; }
.area { font-size: 45px; fill: #5a5e63; font-weight: 400; }
.area .big { font-size: 60px; fill: #3c4043; }
.poi { font-size: 65px; fill: #1a73e8; }
.poi .green { fill: #188038; }
.shield rect { fill: #66a03f; }
.shield text { fill: #fff; font-size: 40px; font-weight: 700; text-anchor: middle; }
.glogo { font-family: Lato, sans-serif; font-weight: 700; font-size: 84px; paint-order: stroke; stroke: rgba(255,255,255,.9); stroke-width: 8px; }
.copy { font-size: 54px; fill: #111; }
.zoom { position: absolute; left: 543px; top: 408px; width: 57px; height: 114px; border-radius: 3px; background: rgba(250,250,250,.78); box-shadow: 0 1px 3px rgba(0,0,0,.3); display: grid; grid-template-rows: 1fr 1fr; }
.zoom button { display: grid; place-items: center; padding-top: 2px; }
.zoom button::before, .plus::after { content: ""; grid-area: 1 / 1; width: 25px; height: 6px; background: #666; }
.plus::after { transform: rotate(90deg); }
.zoom .plus { border-bottom: 1px solid #d5dcd7; }
.bottom { height: 72px; flex: none; display: flex; align-items: center; padding-left: 18px; background: #2196f3; }
.bottom svg { width: 36px; height: 36px; }
.fab { position: absolute; left: 279px; top: 936px; width: 60px; height: 60px; border-radius: 50%; background: #2196f3; display: grid; place-items: center; box-shadow: 0 4px 8px rgba(0,0,0,.35); }
.fab svg { width: 36px; height: 36px; }
```
